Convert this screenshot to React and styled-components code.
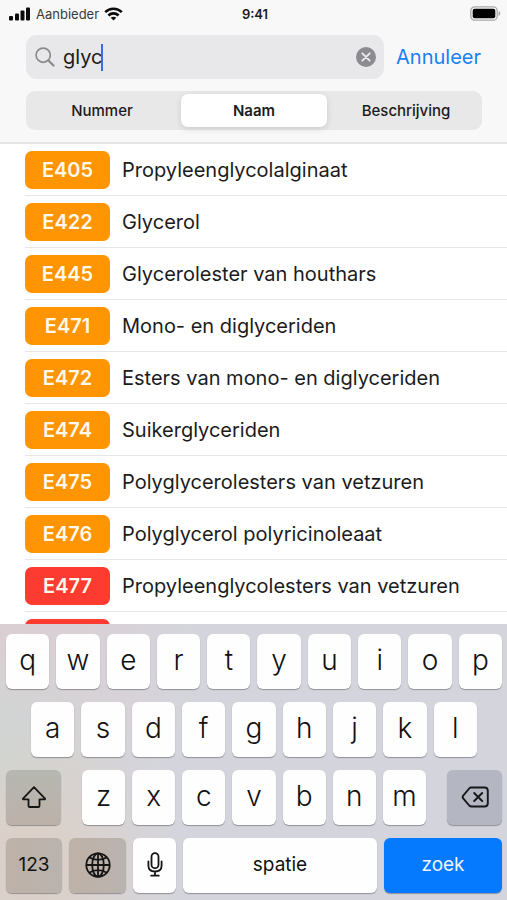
import React, { useState } from "react";
import styled, { createGlobalStyle } from "styled-components";

const GlobalStyle = createGlobalStyle`
  * { box-sizing: border-box; }
  body { margin: 0; background: #fff; }
  body, button, input { font-family: Inter, "Liberation Sans", sans-serif; }
  button { border: 0; padding: 0; margin: 0; background: none; cursor: pointer; }
`;

const Screen = styled.div`
  display: flex;
  flex-direction: column;
  height: 100vh;
  color: #1b1b1d;
  background: #fff;
`;

const Header = styled.header`
  flex: none;
  background: #f8f8f8;
  border-bottom: 2px solid #e5e5e7;
`;

const StatusBar = styled.div`
  display: grid;
  grid-template-columns: 1fr auto 1fr;
  align-items: center;
  height: 27px;
  padding: 0 6px 0 9px;
  font-size: 13px;
  line-height: 16px;
`;

const Carrier = styled.div`
  display: flex;
  align-items: center;
  gap: 5px;
  color: #38383a;
`;

const Clock = styled.time`
  font-weight: 600;
`;

const BatteryIcon = styled.svg`
  justify-self: end;
`;

const SearchRow = styled.div`
  display: flex;
  align-items: center;
  gap: 12px;
  padding: 8px 26px 0;
`;

const SearchField = styled.label`
  display: flex;
  flex: 1;
  min-width: 0;
  align-items: center;
  height: 44px;
  padding: 0 8px 0 9px;
  border-radius: 11px;
  background: #e8e8ea;
`;

const SearchInput = styled.input`
  field-sizing: content;
  min-width: 1px;
  max-width: 80%;
  margin: 0 0 0 8px;
  padding: 0;
  border: 0;
  outline: 0;
  background: transparent;
  color: #1b1b1d;
  caret-color: transparent;
  font-size: 20px;
  line-height: 26px;
`;

const Caret = styled.span`
  width: 2px;
  height: 27px;
  margin-left: -1px;
  background: #3e6ae1;
`;

const ClearButton = styled.button`
  display: flex;
  margin-left: auto;
`;

const CancelButton = styled.button`
  color: #1b7ff5;
  font-size: 20px;
  line-height: 26px;
`;

const Segments = styled.div`
  display: grid;
  grid-template-columns: repeat(3, 1fr);
  gap: 6px;
  margin: 12px 25px 12px 26px;
  padding: 3px;
  border-radius: 9px;
  background: #e8e8e8;
`;

const Segment = styled.label`
  display: block;
  height: 33px;
  border-radius: 7px;
  font-size: 15px;
  font-weight: ${(p) => (p.$active ? 600 : 500)};
  line-height: 34px;
  text-align: center;
  cursor: pointer;
  background: ${(p) => (p.$active ? "#fff" : "transparent")};
  box-shadow: ${(p) => (p.$active ? "0 2px 6px rgba(0, 0, 0, 0.12)" : "none")};
`;

const SegmentRadio = styled.input`
  appearance: none;
  position: absolute;
  margin: 0;
`;

const Results = styled.ul`
  flex: 1;
  min-height: 0;
  margin: 0;
  padding: 0 0 0 25px;
  overflow-y: auto;
  scrollbar-width: none;
  list-style: none;
`;

const ResultRow = styled.li`
  display: flex;
  align-items: center;
  gap: 12px;
  height: 52px;
  border-bottom: 1px solid #e6e6e8;
  font-size: 20px;
  line-height: 26px;
  white-space: nowrap;
`;

const Badge = styled.span`
  flex: none;
  width: 85px;
  height: 38px;
  border-radius: 7px;
  background: ${(p) => (p.$red ? "#fd3b31" : "#ff9502")};
  color: #fff8ec;
  font-weight: 600;
  line-height: 38px;
  text-align: center;
`;

const Keyboard = styled.div`
  flex: none;
  display: grid;
  gap: 13px;
  padding: 10px 5px 7px 6px;
  background:
    radial-gradient(circle at 6% 88%, #ddcfc4 0, rgba(221, 207, 196, 0) 28%),
    radial-gradient(circle at 0 48%, #cfd6d4 0, rgba(207, 214, 212, 0) 26%),
    radial-gradient(circle at 0 12%, #dccdd1 0, rgba(220, 205, 209, 0) 36%),
    #d4d5dc;
`;

const KeyRow = styled.div`
  display: flex;
  gap: ${(p) => p.$gap || 7}px;
  padding: 0 ${(p) => p.$inset || 0}px;
`;

const LetterGroup = styled.div`
  display: flex;
  flex: 1;
  gap: 7px;
`;

const tones = {
  light: "#fefefe",
  olive: "linear-gradient(#b5b8b1, #bcb1a9)",
  sand: "linear-gradient(90deg, #bfb1a6, #b9b3ae)",
  gray: "#b4b6c1",
  blue: "#067aff",
};

const Key = styled.button`
  display: flex;
  align-items: center;
  justify-content: center;
  flex: ${(p) => (p.$width ? `0 0 ${p.$width}px` : "1 1 0")};
  min-width: 0;
  height: 55px;
  padding-bottom: ${(p) => (p.$letter ? 4 : 2)}px;
  border-radius: 6px;
  background: ${(p) => tones[p.$tone || "light"]};
  box-shadow: 0 1px 1px rgba(60, 60, 70, 0.45);
  color: ${(p) => (p.$tone === "blue" ? "#eef6ff" : "#111")};
  font-size: ${(p) => (p.$letter ? 28 : 19)}px;
  font-weight: ${(p) => (p.$letter ? 350 : 400)};
  line-height: 32px;
`;

const SignalIcon = () => (
  <svg width="22" height="14" viewBox="0 0 22 14" fill="#0b0b0b" aria-hidden="true">
    <rect x="0" y="9" width="4" height="4.5" rx="1" />
    <rect x="6" y="6.5" width="4" height="7" rx="1" />
    <rect x="11.5" y="3.5" width="4" height="10" rx="1" />
    <rect x="17" y="0.5" width="4" height="13" rx="1" />
  </svg>
);

const WifiIcon = () => (
  <svg width="19" height="14" viewBox="0 0 19 14" fill="none" stroke="#0b0b0b" strokeWidth="2.6" aria-hidden="true">
    <path d="M1.2 5.2C5.8.6 13.2.6 17.8 5.2" />
    <path d="M4.4 8.5c2.9-2.8 7.3-2.8 10.2 0" />
    <path d="M9.5 13.6 6.7 10.8c1.6-1.4 4-1.4 5.6 0z" fill="#0b0b0b" stroke="none" />
  </svg>
);

const Battery = () => (
  <BatteryIcon width="31" height="15" viewBox="0 0 31 15" role="img" aria-label="Batterij">
    <rect x="0.8" y="0.8" width="26.4" height="13.4" rx="4" fill="#f8f8f8" stroke="#a9a9a9" strokeWidth="1.3" />
    <rect x="2.7" y="2.7" width="22.6" height="9.6" rx="2" fill="#000" />
    <path d="M28.6 5v5c1.1-.5 1.7-1.4 1.7-2.5S29.7 5.5 28.6 5z" fill="#a9a9a9" />
  </BatteryIcon>
);

const SearchIcon = () => (
  <svg width="20" height="20" viewBox="0 0 20 20" fill="none" stroke="#8a8a8e" strokeLinecap="round" aria-hidden="true">
    <circle cx="8.2" cy="8.2" r="7.1" strokeWidth="1.7" />
    <path d="m13.5 13.5 5 5" strokeWidth="2.2" />
  </svg>
);

const ClearIcon = () => (
  <svg width="20" height="20" viewBox="0 0 20 20" aria-hidden="true">
    <circle cx="10" cy="10" r="10" fill="#8c8c90" />
    <path d="m6.3 6.3 7.4 7.4m0-7.4-7.4 7.4" stroke="#ededef" strokeWidth="1.8" strokeLinecap="round" />
  </svg>
);

const ShiftIcon = () => (
  <svg width="26" height="24" viewBox="0 0 26 24" fill="none" stroke="#151515" strokeWidth="1.8" strokeLinejoin="round" aria-hidden="true">
    <path d="M13 2.2 24 13.6q.5.7-.4.7H18.500v6.400q0 1.300-1.300 1.300H8.800q-1.300 0-1.300-1.300v-6.400H2.400q-.9 0-.4-.7z" />
  </svg>
);

const DeleteIcon = () => (
  <svg width="28" height="22" viewBox="0 0 28 22" fill="none" stroke="#17171b" strokeWidth="1.9" strokeLinecap="round" strokeLinejoin="round" aria-hidden="true">
    <path d="M10 1.5h13.5q3.300 0 3.300 3.300v12.400q0 3.300-3.300 3.300H10.500q-1.300 0-2.300-1l-6-7.200q-1.100-1.300 0-2.600l6-7.200q.8-1 1.800-1z" />
    <path d="m13.2 7 8 8m0-8-8 8" />
  </svg>
);

const GlobeIcon = () => (
  <svg width="26" height="26" viewBox="0 0 26 26" fill="none" stroke="#151515" strokeWidth="1.8" aria-hidden="true">
    <circle cx="13" cy="13" r="11.7" />
    <ellipse cx="13" cy="13" rx="5.8" ry="11.7" />
    <path d="M13 1.3v23.4M1.300 13h23.400M4.300 5.300c4.700 3.400 12.700 3.400 17.400 0M4.300 20.700c4.700-3.400 12.700-3.400 17.400 0" />
  </svg>
);

const MicIcon = () => (
  <svg width="16" height="25" viewBox="0 0 16 25" fill="none" stroke="#151515" strokeWidth="1.8" strokeLinecap="round" aria-hidden="true">
    <rect x="4.5" y="1.2" width="7" height="15" rx="3.5" />
    <path d="M1.4 9.5v4q0 6 6.600 6t6.600-6v-4M8 19.500v4M4.200 23.700h7.600" />
  </svg>
);

const additives = [
  { code: "E405", name: "Propyleenglycolalginaat" },
  { code: "E422", name: "Glycerol" },
  { code: "E445", name: "Glycerolester van houthars" },
  { code: "E471", name: "Mono- en diglyceriden" },
  { code: "E472", name: "Esters van mono- en diglyceriden" },
  { code: "E474", name: "Suikerglyceriden" },
  { code: "E475", name: "Polyglycerolesters van vetzuren" },
  { code: "E476", name: "Polyglycerol polyricinoleaat" },
  { code: "E477", name: "Propyleenglycolesters van vetzuren", red: true },
  { code: "", name: "", red: true },
];

const scopes = ["Nummer", "Naam", "Beschrijving"];

export default function App() {
  const [query, setQuery] = useState("glyc");
  const [scope, setScope] = useState("Naam");

  const letters = (chars) =>
    [...chars].map((char) => (
      <Key key={char} type="button" $letter onClick={() => setQuery(query + char)}>
        {char}
      </Key>
    ));

  return (
    <Screen>
      <GlobalStyle />
      <Header>
        <StatusBar>
          <Carrier>
            <SignalIcon />
            <span>Aanbieder</span>
            <WifiIcon />
          </Carrier>
          <Clock>9:41</Clock>
          <Battery />
        </StatusBar>
        <SearchRow>
          <SearchField>
            <SearchIcon />
            <SearchInput
              type="text"
              aria-label="Zoek"
              value={query}
              onChange={(event) => setQuery(event.target.value)}
            />
            <Caret />
            <ClearButton type="button" aria-label="Wis" onClick={() => setQuery("")}>
              <ClearIcon />
            </ClearButton>
          </SearchField>
          <CancelButton type="button">Annuleer</CancelButton>
        </SearchRow>
        <Segments role="radiogroup">
          {scopes.map((item) => (
            <Segment key={item} $active={item === scope}>
              <SegmentRadio
                type="radio"
                name="scope"
                checked={item === scope}
                onChange={() => setScope(item)}
              />
              {item}
            </Segment>
          ))}
        </Segments>
      </Header>
      <Results>
        {additives.map((item, index) => (
          <ResultRow key={index}>
            <Badge $red={item.red}>{item.code}</Badge>
            <span>{item.name}</span>
          </ResultRow>
        ))}
      </Results>
      <Keyboard>
        <KeyRow>{letters("qwertyuiop")}</KeyRow>
        <KeyRow $inset={25}>{letters("asdfghjkl")}</KeyRow>
        <KeyRow $gap={21}>
          <Key type="button" aria-label="Shift" $width={55} $tone="olive">
            <ShiftIcon />
          </Key>
          <LetterGroup>{letters("zxcvbnm")}</LetterGroup>
          <Key
            type="button"
            aria-label="Verwijder"
            $width={55}
            $tone="gray"
            onClick={() => setQuery(query.slice(0, -1))}
          >
            <DeleteIcon />
          </Key>
        </KeyRow>
        <KeyRow>
          <Key type="button" $width={56} $tone="sand">123</Key>
          <Key type="button" aria-label="Volgend toetsenbord" $width={57} $tone="sand">
            <GlobeIcon />
          </Key>
          <Key type="button" aria-label="Dicteer" $width={43}>
            <MicIcon />
          </Key>
          <Key type="button" onClick={() => setQuery(query + " ")}>spatie</Key>
          <Key type="button" $width={118} $tone="blue">zoek</Key>
        </KeyRow>
      </Keyboard>
    </Screen>
  );
}
